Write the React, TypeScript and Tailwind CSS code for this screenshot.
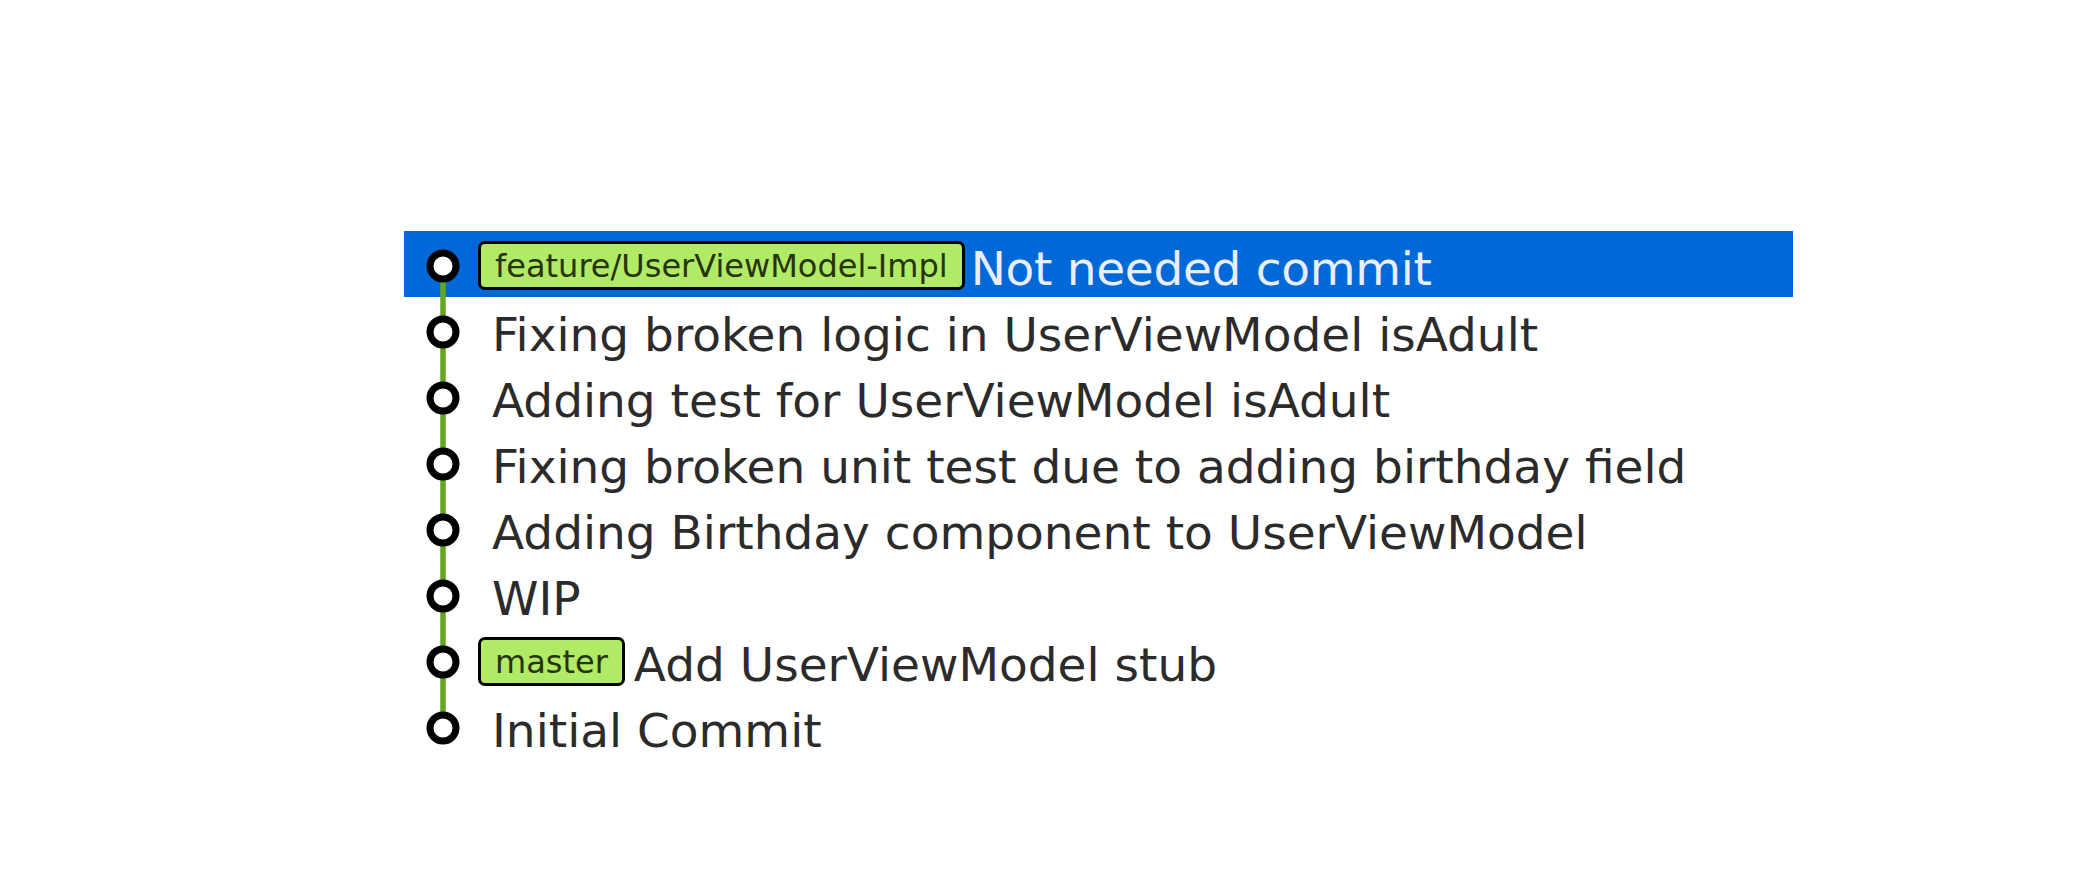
import React from "react";

type Row = { msg: string; badge?: string; selected?: boolean };

const rows: Row[] = [
  { msg: "Not needed commit", badge: "feature/UserViewModel-Impl", selected: true },
  { msg: "Fixing broken logic in UserViewModel isAdult" },
  { msg: "Adding test for UserViewModel isAdult" },
  { msg: "Fixing broken unit test due to adding birthday field" },
  { msg: "Adding Birthday component to UserViewModel" },
  { msg: "WIP" },
  { msg: "Add UserViewModel stub", badge: "master" },
  { msg: "Initial Commit" },
];

function Graph({ first, last }: { first: boolean; last: boolean }) {
  return (
    <svg width="74" height="66" viewBox="0 0 74 66" className="shrink-0">
      <line
        x1="39"
        x2="39"
        y1={first ? 35 : 0}
        y2={last ? 35 : 66}
        stroke="#63a61f"
        strokeWidth="5.5"
      />
      <circle cx="39" cy="35" r="13" fill="#ffffff" stroke="#000000" strokeWidth="7" />
    </svg>
  );
}

export default function App() {
  return (
    <div className="w-[2098px] h-[896px] bg-white pt-[231px] pl-[404px]">
      <div className="w-[1389px] flex flex-col" style={{ fontFamily: '"DejaVu Sans", sans-serif' }}>
        {rows.map((r, i) => (
          <div
            key={i}
            className={`h-[66px] flex items-center ${r.selected ? "bg-[#0069d7]" : "bg-white"}`}
          >
            <Graph first={i === 0} last={i === rows.length - 1} />
            {r.badge ? (
              <div className="flex items-center pt-[3px]">
                <span className="h-[49px] px-[14px] flex items-center rounded-[7px] border-[3px] border-black bg-[#b1eb66] text-[#26330c] text-[32px] leading-none">
                  {r.badge}
                </span>
                <span
                  className={`pt-[5px] text-[47px] leading-none ${r.selected ? "ml-[6px] text-[#e9edff] tracking-[-0.3px]" : "ml-[9px] text-[#2b2b2b]"}`}
                >
                  {r.msg}
                </span>
              </div>
            ) : (
              <span className="ml-[14px] pt-[8px] text-[47px] leading-none text-[#2b2b2b]">{r.msg}</span>
            )}
          </div>
        ))}
      </div>
    </div>
  );
}
